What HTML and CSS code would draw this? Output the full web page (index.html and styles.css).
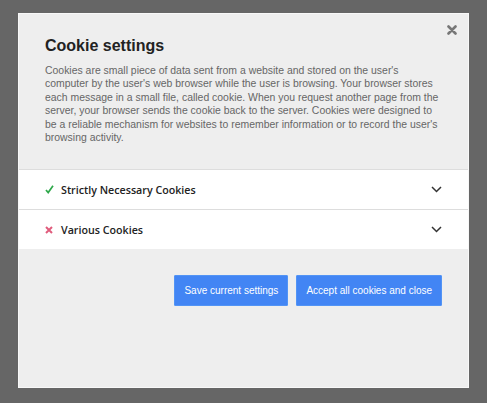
FILE: index.html
```html
<!DOCTYPE html>
<html lang="en">
<head>
    <meta charset="UTF-8">
    <title>Cookie settings</title>
    <link rel="stylesheet" href="styles.css">
</head>
<body>
    <div class="modal">
        <button class="close" aria-label="Close">
            <svg width="10" height="10" viewBox="0 0 10 10"><path d="M1.5 1.5 L8.5 8.5 M8.5 1.5 L1.5 8.5" stroke="#777" stroke-width="2.6" stroke-linecap="round"/></svg>
        </button>
        <div class="intro">
            <h2>Cookie settings</h2>
            <p>Cookies are small piece of data sent from a website and stored on the user's computer by the user's web browser while the user is browsing. Your browser stores each message in a small file, called cookie. When you request another page from the server, your browser sends the cookie back to the server. Cookies were designed to be a reliable mechanism for websites to remember information or to record the user's browsing activity.</p>
        </div>
        <div class="cookie-row">
            <span class="mark">
                <svg width="9" height="9" viewBox="0 0 9 9"><path d="M1 5 L3.2 7.6 L8 0.8" fill="none" stroke="#2ea84a" stroke-width="1.7"/></svg>
            </span>
            <span class="label">Strictly Necessary Cookies</span>
            <svg class="chevron" width="11" height="7" viewBox="0 0 11 7"><path d="M1 1 L5.5 5.5 L10 1" fill="none" stroke="#333" stroke-width="1.5"/></svg>
        </div>
        <div class="cookie-row">
            <span class="mark">
                <svg width="8" height="8" viewBox="0 0 8 8"><path d="M1 1 L7 7 M7 1 L1 7" stroke="#e05c7c" stroke-width="2"/></svg>
            </span>
            <span class="label">Various Cookies</span>
            <svg class="chevron" width="11" height="7" viewBox="0 0 11 7"><path d="M1 1 L5.5 5.5 L10 1" fill="none" stroke="#333" stroke-width="1.5"/></svg>
        </div>
        <div class="actions">
            <button class="btn">Save current settings</button>
            <button class="btn">Accept all cookies and close</button>
        </div>
    </div>
</body>
</html>
```

FILE: styles.css
```css
body {
    margin: 0;
    background-color: #666666;
    font-family: "Liberation Sans", Arial, sans-serif;
}

.modal {
    position: relative;
    margin: 13px 0 0 18px;
    width: 449px;
    height: 373px;
    background-color: #eeeeee;
    border: 1px solid #f8f8f8;
}

.close {
    position: absolute;
    top: 11px;
    right: 11px;
    padding: 0;
    border: none;
    background: none;
    cursor: pointer;
    line-height: 0;
}

.intro {
    padding: 21px 26px 25px 26px;
}

.intro h2 {
    margin: 0 0 7px 0;
    font-size: 16px;
    line-height: 22px;
    color: #222;
}

.intro p {
    margin: 0;
    font-size: 10.45px;
    line-height: 13.4px;
    color: #666;
}

.cookie-row {
    display: flex;
    align-items: center;
    height: 39px;
    padding: 0 26px;
    background-color: #fff;
    border-top: 1px solid #dddddd;
}

.cookie-row:last-of-type {
    border-bottom: 1px solid #dddddd;
}

.mark {
    width: 16px;
    line-height: 0;
}

.label {
    flex: 1;
    font-family: "Open Sans", sans-serif;
    font-weight: 600;
    font-size: 10.7px;
    color: #222;
}

.actions {
    display: flex;
    justify-content: flex-end;
    gap: 8px;
    padding: 26px 26px 0 0;
}

.btn {
    height: 31px;
    padding: 0 9px;
    border: 1px solid #5294f5;
    border-radius: 1px;
    background-color: #4285f4;
    color: #fff;
    font-family: "Liberation Sans", Arial, sans-serif;
    font-size: 10px;
    cursor: pointer;
}
```
